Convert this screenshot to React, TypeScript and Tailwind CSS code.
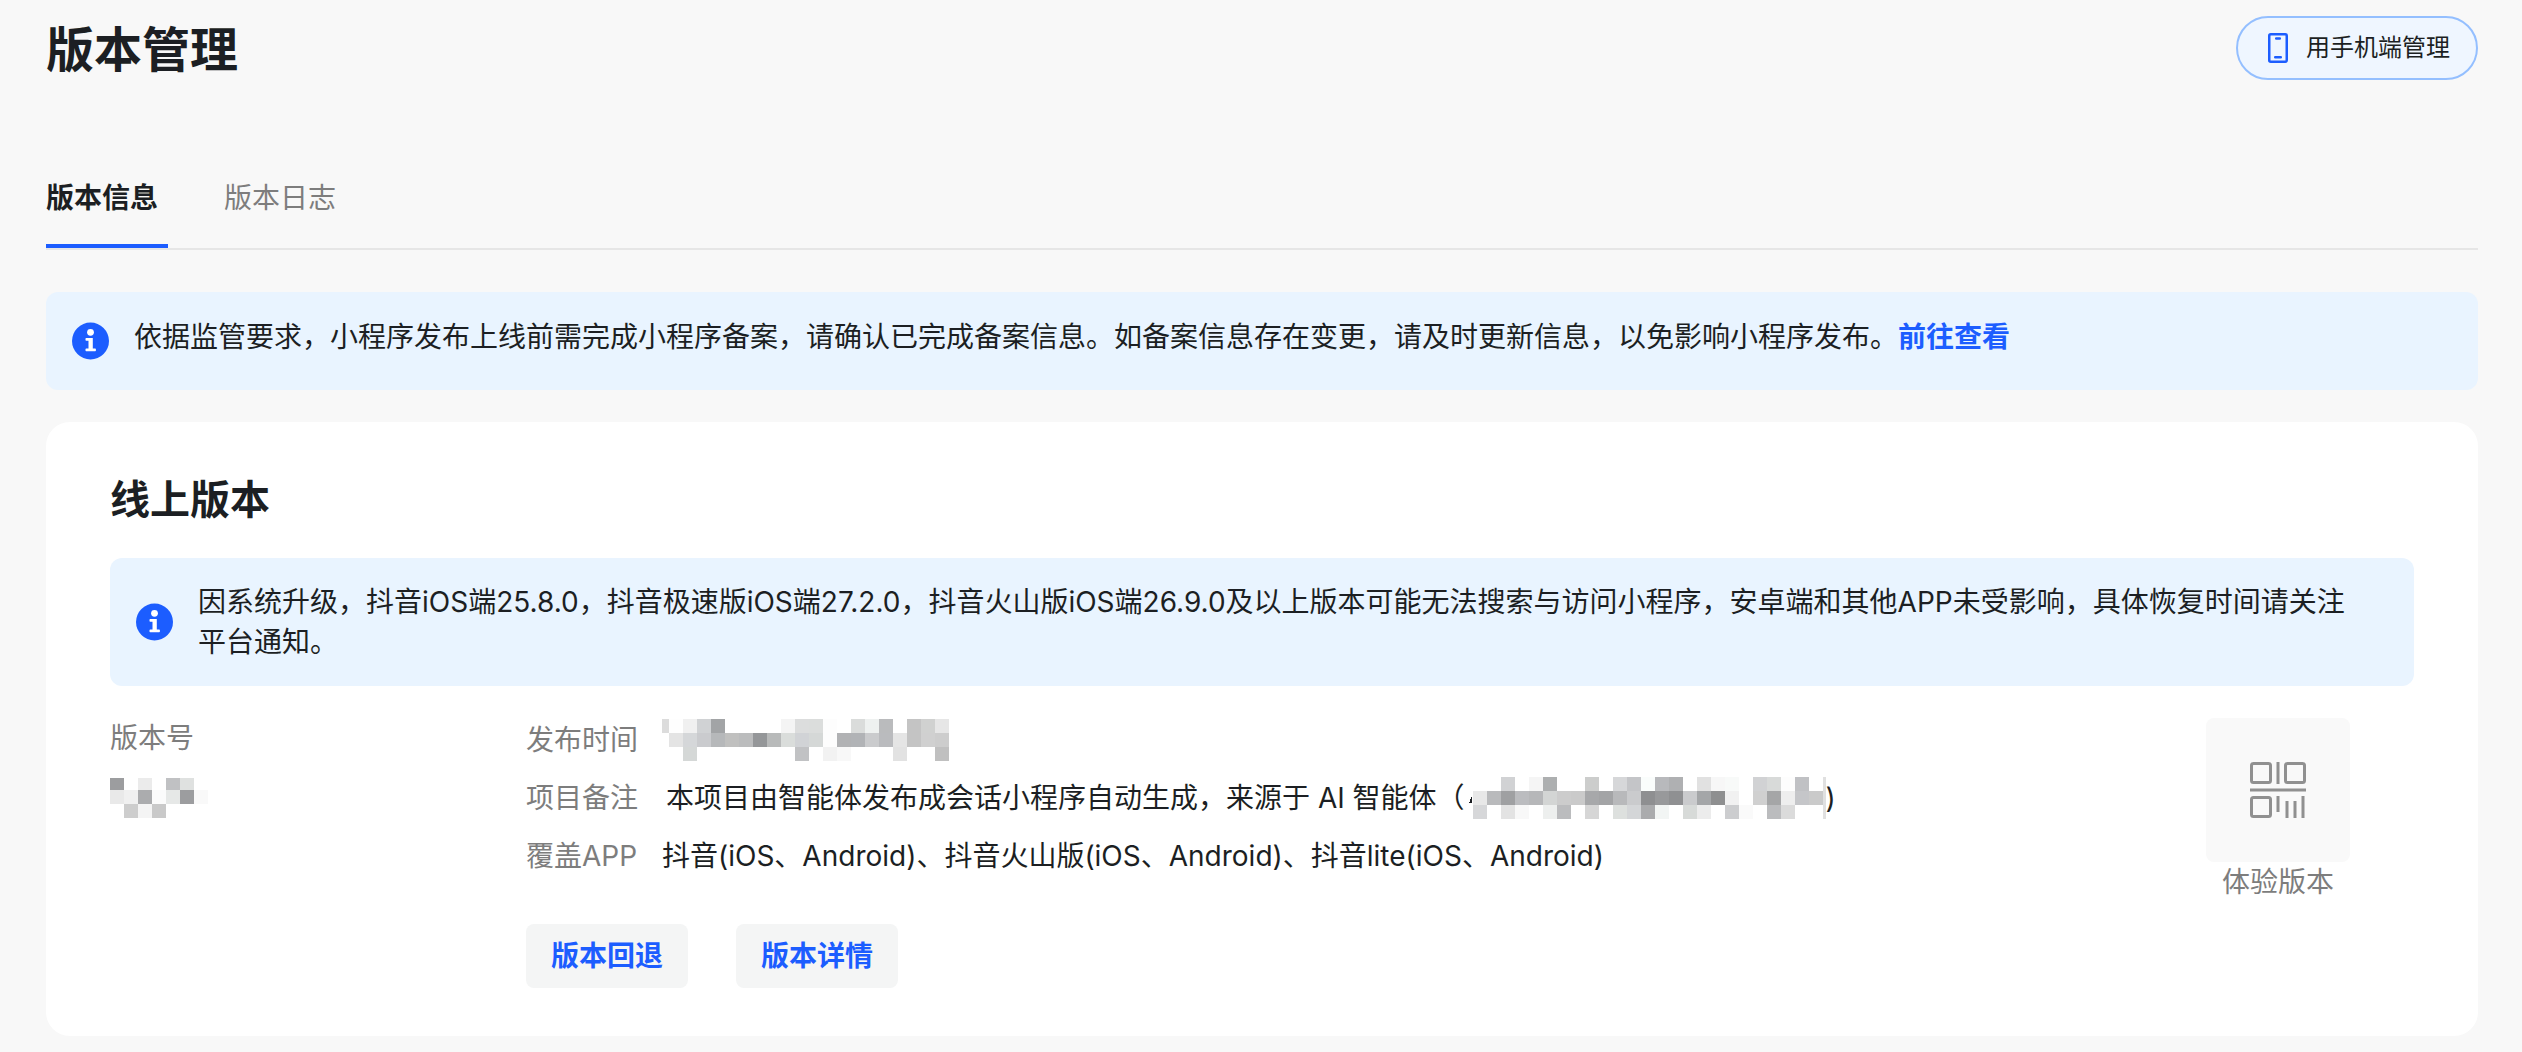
import React from "react";

type Cells = (string | null)[];

const _ = null;

function Mosaic({ rows, heights, lead = 0, width, label, children }: { rows: Cells[]; heights: number[]; lead?: number; width: number; label: string; children?: React.ReactNode }) {
  const total = heights.reduce((a, b) => a + b, 0);
  return (
    <svg width={width} height={total} viewBox={`0 0 ${width} ${total}`} role="img" aria-label={label} shapeRendering="crispEdges" className="block shrink-0">
      {rows.map((row, r) => {
        const y = heights.slice(0, r).reduce((a, b) => a + b, 0);
        return row.map((c, i) => (c ? <rect key={`${r}-${i}`} x={lead + i * 14} y={y} width={14} height={heights[r]} fill={c} /> : null));
      })}
      {children}
    </svg>
  );
}

const versionCells: Cells[] = [
  ["#9c9d9f", _, "#ebebeb", _, "#c0c1c3", "#dfe1e0"],
  ["#e9e9e9", "#f0f0f0", "#abacae", "#fbfbfb", "#e6e8e7", "#9c9d9f", "#f9f9f9"],
  [_, "#cdcdcd", "#f4f4f4", "#c9c9c9"],
];

const timeCells: Cells[] = [
  ["#fefefe", "#f0f0f0", "#d0d2d4", "#a2a4a6", _, _, _, _, "#f4f4f4", "#dcdddd", "#dbdddc", "#fdfdfd", _, "#dadcdb", "#eef1f0", "#babbbd", _, "#c4c4c4", "#d0d1d0", "#e6e6e6"],
  ["#e4e4e4", "#d5d7d9", "#cacbce", "#b6b8ba", "#c0c0bf", "#bbbcbd", "#959799", "#b8baba", "#dadddb", "#d1d3d6", "#d5d8d7", "#fdfdfd", "#b1b2b4", "#b1b3b6", "#cacbcd", "#babbbe", "#e5e5e5", "#c4c4c4", "#d0d0d0", "#cdcdcd"],
  [_, "#d5d8d7", _, _, _, _, _, _, _, "#c1c2c4", _, "#f2f2f2", "#f8f8f8", _, _, _, "#e2e2e2", _, _, "#c0c0c0"],
];

const sourceCells: Cells[] = [
  [_, _, "#d1d2d4", _, "#f5f5f5", "#adafb0", _, _, "#cccdcc", _, "#d6d7d9", "#c4c5c8", "#fafdfc", "#b8b9bc", "#afb0b2", _, "#e1e1e1", "#f7f7f7", "#f8faf9", _, "#d1d2d4", "#d8dad9", "#fdfdfd", "#c0c1c4"],
  ["#e8e8e8", "#b9babc", "#9fa0a2", "#bbbcbf", "#b6b7b9", "#d3d5d4", "#cccccc", "#cacaca", "#a7a8aa", "#a3a4a6", "#b8b9bb", "#cacbcd", "#8e8f91", "#98999b", "#8f9092", "#cacbcd", "#a4a6a8", "#8e8f90", "#f1f1f1", _, "#d0d0d0", "#a5a6a7", "#eeeeee", "#c5c6c9", "#cacaca"],
  ["#d6d7d9", _, "#e3e3e3", "#f8f8f8", _, "#edefee", "#bbbcbe", _, "#d6d6d6", _, "#dde0de", "#d4d6d8", "#aaabad", "#f2f5f4", _, "#d7dad8", "#ececec", _, "#cccdcf", "#fafafa", _, "#bbbcbe", "#dbdbdb"],
];

function InfoIcon() {
  return (
    <svg width="38" height="38" viewBox="0 0 38 38" aria-hidden="true" className="block shrink-0">
      <circle cx="18.5" cy="19" r="18.5" fill="#1c5dff" />
      <circle cx="18.5" cy="10.3" r="3.4" fill="#fff" />
      <path d="M14.2 16h6.6v10.6h2.4c.4 0 .7.3.7.7v1.2c0 .4-.3.7-.7.7h-9c-.4 0-.7-.3-.7-.7v-1.2c0-.4.3-.7.7-.7h2.3v-7.9h-2.3c-.4 0-.7-.3-.7-.7v-1.3c0-.4.3-.7.7-.7z" fill="#fff" />
    </svg>
  );
}

function PhoneIcon() {
  return (
    <svg width="20" height="30" viewBox="0 0 20 30" fill="none" stroke="#1c5dff" strokeWidth="2.5" aria-hidden="true">
      <rect x="1.25" y="1.25" width="17.5" height="27.5" rx="1.5" />
      <path d="M8.2 5.5h3.6M7.2 24.3h5.6" strokeLinecap="round" />
    </svg>
  );
}

function QrIcon() {
  return (
    <svg width="56" height="56" viewBox="0 0 56 56" fill="none" stroke="#909090" strokeWidth="3" aria-hidden="true">
      <rect x="1.5" y="1.5" width="19" height="19" rx="2" />
      <rect x="35.5" y="1.5" width="19" height="19" rx="2" />
      <rect x="1.5" y="35.5" width="19" height="19" rx="2" />
      <path d="M28 0v22M0 28h56M28 34v16M37 39v17M45 39v17M53 34v22" />
    </svg>
  );
}

function Row({ label, children }: { label: string; children: React.ReactNode }) {
  return (
    <div className="flex h-10 items-center">
      <dt className="w-[136px] shrink-0 text-[#7d7d7d]">{label}</dt>
      <dd className="flex items-center whitespace-nowrap">{children}</dd>
    </div>
  );
}

export default function App() {
  return (
    <main className="min-h-screen bg-[#f8f8f8] pr-11 pb-4 pl-[46px] font-['Inter','Noto_Sans_CJK_SC',sans-serif] text-[28px] leading-10 text-[#1c1f23]">
      <header className="flex items-start justify-between pt-4">
        <h1 className="pt-0.5 text-[48px] leading-[64px] font-bold">版本管理</h1>
        <button type="button" className="flex h-16 items-center gap-[18px] rounded-full border-2 border-[#94bfff] bg-[#eff6ff] pr-[26px] pl-[30px] text-2xl">
          <PhoneIcon />
          用手机端管理
        </button>
      </header>

      <nav role="tablist" className="mt-24 flex gap-14 border-b-2 border-[#e6e6e6]">
        <button type="button" role="tab" aria-selected="true" className="border-b-4 border-[#1c5dff] pr-2.5 pb-[26px] text-left font-bold">版本信息</button>
        <button type="button" role="tab" aria-selected="false" className="border-b-4 border-transparent pb-[26px] text-[#7d7d7d]">版本日志</button>
      </nav>

      <div role="status" className="mt-[42px] flex items-center gap-6 rounded-xl bg-[#e9f4ff] py-[25px] pr-6 pl-[26px]">
        <InfoIcon />
        <p className="pb-2">
          依据监管要求，小程序发布上线前需完成小程序备案，请确认已完成备案信息。如备案信息存在变更，请及时更新信息，以免影响小程序发布。
          <a href="#filing" className="font-bold text-[#1c5dff]">前往查看</a>
        </p>
      </div>

      <section className="mt-8 rounded-3xl bg-white px-16 pt-[50px] pb-12">
        <h2 className="text-[40px] leading-[56px] font-bold">线上版本</h2>
        <div role="status" className="mt-[30px] flex items-center gap-6 rounded-xl bg-[#e9f4ff] py-6 pr-11 pl-[26px]">
          <InfoIcon />
          <p>因系统升级，抖音iOS端25.8.0，抖音极速版iOS端27.2.0，抖音火山版iOS端26.9.0及以上版本可能无法搜索与访问小程序，安卓端和其他APP未受影响，具体恢复时间请关注平台通知。</p>
        </div>

        <div className="mt-8 flex items-start">
          <div className="w-[416px] shrink-0">
            <div className="text-[#7d7d7d]">版本号</div>
            <div className="mt-5">
              <Mosaic rows={versionCells} heights={[12, 14, 14]} width={98} label="版本号" />
            </div>
          </div>
          <div className="min-w-0 flex-1 pt-0.5">
            <dl className="flex flex-col gap-[18px]">
              <Row label="发布时间">
                <Mosaic rows={timeCells} heights={[14, 14, 14]} lead={7} width={287} label="发布时间">
                  <rect x="0" y="0" width="7" height="14" fill="#dcdcdc" />
                </Mosaic>
              </Row>
              <Row label="项目备注">
                <span className="px-1">本项目由智能体发布成会话小程序自动生成，来源于 AI 智能体（</span>
                <Mosaic rows={sourceCells} heights={[14, 14, 14]} lead={4} width={357} label="智能体名称">
                  <path d="M0 26l3-7v7z" fill="#1c1f23" />
                  <rect x="354" y="0" width="3" height="42" fill="#e0e0e0" />
                </Mosaic>
                )
              </Row>
              <Row label="覆盖APP">抖音(iOS、Android)、抖音火山版(iOS、Android)、抖音lite(iOS、Android)</Row>
            </dl>
            <div className="mt-12 flex gap-12">
              <button type="button" className="h-16 rounded-lg bg-[#f4f5f5] px-[25px] font-bold text-[#1c5dff]">版本回退</button>
              <button type="button" className="h-16 rounded-lg bg-[#f4f5f5] px-[25px] font-bold text-[#1c5dff]">版本详情</button>
            </div>
          </div>
          <figure className="mr-16 flex w-36 shrink-0 flex-col items-center">
            <div className="flex h-36 w-36 items-center justify-center rounded-lg bg-[#f9f9f9]">
              <QrIcon />
            </div>
            <figcaption className="text-[#7d7d7d]">体验版本</figcaption>
          </figure>
        </div>
      </section>
    </main>
  );
}
